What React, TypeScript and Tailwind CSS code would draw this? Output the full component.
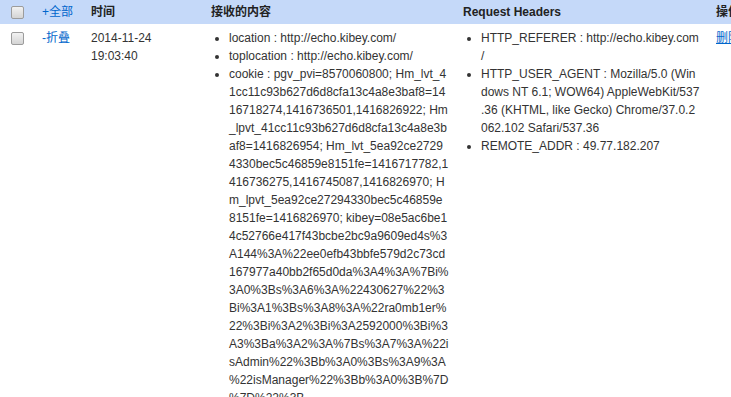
import React from "react";

// Each entry is pre-broken into the lines the column shows (break-all style).
const received: string[][] = [
  ["location : http://echo.kibey.com/"],
  ["toplocation : http://echo.kibey.com/"],
  [
    "cookie : pgv_pvi=8570060800; Hm_lvt_4",
    "1cc11c93b627d6d8cfa13c4a8e3baf8=14",
    "16718274,1416736501,1416826922; Hm",
    "_lpvt_41cc11c93b627d6d8cfa13c4a8e3b",
    "af8=1416826954; Hm_lvt_5ea92ce2729",
    "4330bec5c46859e8151fe=1416717782,1",
    "416736275,1416745087,1416826970; H",
    "m_lpvt_5ea92ce27294330bec5c46859e",
    "8151fe=1416826970; kibey=08e5ac6be1",
    "4c52766e417f43bcbe2bc9a9609ed4s%3",
    "A144%3A%22ee0efb43bbfe579d2c73cd",
    "167977a40bb2f65d0da%3A4%3A%7Bi%",
    "3A0%3Bs%3A6%3A%22430627%22%3",
    "Bi%3A1%3Bs%3A8%3A%22ra0mb1er%",
    "22%3Bi%3A2%3Bi%3A2592000%3Bi%3",
    "A3%3Ba%3A2%3A%7Bs%3A7%3A%22i",
    "sAdmin%22%3Bb%3A0%3Bs%3A9%3A",
    "%22isManager%22%3Bb%3A0%3B%7D",
    "%7D%22%3B",
  ],
];

const headers: string[][] = [
  ["HTTP_REFERER : http://echo.kibey.com", "/"],
  [
    "HTTP_USER_AGENT : Mozilla/5.0 (Win",
    "dows NT 6.1; WOW64) AppleWebKit/537",
    ".36 (KHTML, like Gecko) Chrome/37.0.2",
    "062.102 Safari/537.36",
  ],
  ["REMOTE_ADDR : 49.77.182.207"],
];

function Box() {
  return (
    <span className="inline-block align-middle ml-[3px] w-[13px] h-[13px] rounded-[2px] border border-[#9c9c9c] bg-gradient-to-b from-[#f2f2f2] to-[#d4d4d4]" />
  );
}

function Bullets({ items }: { items: string[][] }) {
  return (
    <ul className="list-disc pl-[18px] m-0">
      {items.map((lines, i) => (
        <li key={i} className="leading-[18px] whitespace-nowrap">
          {lines.map((l, j) => (
            <React.Fragment key={j}>
              {j > 0 && <br />}
              {l}
            </React.Fragment>
          ))}
        </li>
      ))}
    </ul>
  );
}

export default function App() {
  return (
    <div
      className="w-[731px] h-[397px] overflow-hidden bg-white text-[12px] text-[#333] leading-[18px]"
      style={{ fontFamily: '"Liberation Sans", Arial, "Noto Sans CJK SC", sans-serif' }}
    >
      <table className="table-fixed border-collapse w-[780px]">
        <colgroup>
          <col className="w-[34px]" />
          <col className="w-[49px]" />
          <col className="w-[120px]" />
          <col className="w-[252px]" />
          <col className="w-[253px]" />
          <col className="w-[72px]" />
        </colgroup>
        <thead>
          <tr className="bg-[#c5d9f9] h-[24px]">
            <th className="px-2 py-[3px] text-left align-middle">
              <Box />
            </th>
            <th className="px-2 py-[3px] text-left font-normal">
              <a className="text-[#0066cc]">+全部</a>
            </th>
            <th className="px-2 py-[3px] text-left font-bold text-[#222]">时间</th>
            <th className="px-2 py-[3px] text-left font-bold text-[#222]">接收的内容</th>
            <th className="px-2 py-[3px] text-left font-bold text-[#222]">Request Headers</th>
            <th className="px-2 py-[3px] text-left font-bold text-[#222] whitespace-nowrap">操作</th>
          </tr>
        </thead>
        <tbody>
          <tr className="align-top">
            <td className="px-2 pt-[5px]">
              <Box />
            </td>
            <td className="px-2 pt-[5px]">
              <a className="text-[#0066cc]">-折叠</a>
            </td>
            <td className="px-2 pt-[5px]">
              2014-11-24
              <br />
              19:03:40
            </td>
            <td className="px-2 pt-[5px]">
              <Bullets items={received} />
            </td>
            <td className="px-2 pt-[5px]">
              <Bullets items={headers} />
            </td>
            <td className="px-2 pt-[5px] whitespace-nowrap">
              <a className="text-[#0066cc] underline">删除</a>
            </td>
          </tr>
        </tbody>
      </table>
    </div>
  );
}
